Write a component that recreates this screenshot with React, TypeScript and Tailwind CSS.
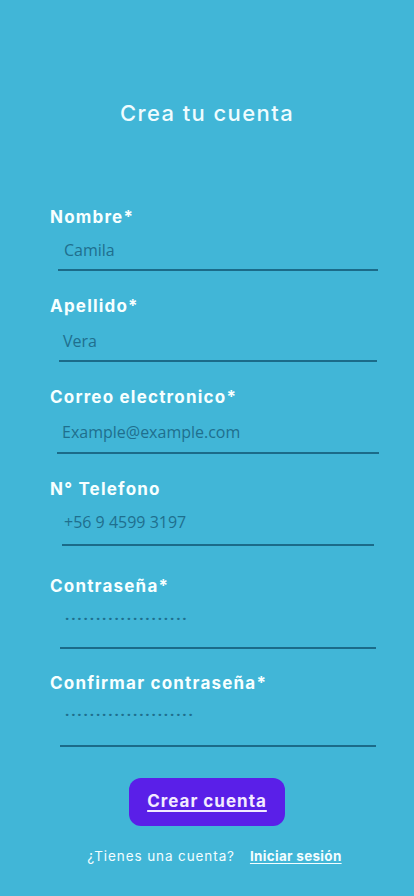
import React from "react";

type Field = {
  label: string;
  value: string;
  password?: boolean;
  labelClass: string;
  boxClass: string;
};

const FIELDS: Field[] = [
  {
    label: "Nombre*",
    value: "Camila",
    labelClass: "mt-0",
    boxClass: "mt-[10px] pb-[7px] ml-[8px] mr-[36px] pl-[6px]",
  },
  {
    label: "Apellido*",
    value: "Vera",
    labelClass: "mt-[24px]",
    boxClass: "mt-[12px] pb-[7px] ml-[9px] mr-[37px] pl-[4px]",
  },
  {
    label: "Correo electronico*",
    value: "Example@example.com",
    labelClass: "mt-[24px]",
    boxClass: "mt-[12px] pb-[8px] ml-[7px] mr-[35px] pl-[5px]",
  },
  {
    label: "N° Telefono",
    value: "+56 9 4599 3197",
    labelClass: "mt-[24px]",
    boxClass: "mt-[10px] pb-[10px] ml-[12px] mr-[40px] pl-[2px]",
  },
  {
    label: "Contraseña*",
    value: "····················",
    password: true,
    labelClass: "mt-[29px]",
    boxClass: "mt-[11px] pb-[15px] ml-[10px] mr-[38px] pl-[5px]",
  },
  {
    label: "Confirmar contraseña*",
    value: "·····················",
    password: true,
    labelClass: "mt-[23px]",
    boxClass: "mt-[10px] pb-[17px] ml-[10px] mr-[38px] pl-[5px]",
  },
];

export default function App() {
  return (
    <div className="min-h-[896px] w-full bg-[#41b6d7] font-['Inter',sans-serif]">
      <div className="pt-[99px] text-center text-[22px] leading-[28px] font-medium tracking-[1.4px] text-[#effcff]">
        Crea tu cuenta
      </div>

      {/* Form */}
      <div className="mt-[79px] pl-[50px]">
        {FIELDS.map((f) => (
          <div key={f.label}>
            <div
              className={`${f.labelClass} h-[22px] text-[17px] leading-[22px] font-bold tracking-[1.2px] text-[#f7ffff]`}
            >
              {f.label}
            </div>
            <div className={`${f.boxClass} border-b-2 border-[#1b6b89]`}>
              {f.password ? (
                <div className="h-[24px] text-[15px] leading-[20px] tracking-[1.9px] text-[#1f6f8e] font-['Open_Sans',sans-serif] font-bold">
                  {f.value}
                </div>
              ) : (
                <div className="h-[24px] text-[16px] leading-[24px] text-[#1f6f8e] font-['Open_Sans',sans-serif]">
                  {f.value}
                </div>
              )}
            </div>
          </div>
        ))}
      </div>

      <div className="mt-[31px] flex justify-center">
        <button className="h-[48px] w-[156px] rounded-[12px] bg-[#5a1fe8] text-[17px] font-bold tracking-[1px] text-[#f3ebff] underline underline-offset-[3px] decoration-2">
          Crear cuenta
        </button>
      </div>

      <div className="mt-[20px] flex justify-center gap-[15px] pl-[15px] text-[13.5px] leading-[20px] text-[#f3fdff]">
        <span className="tracking-[0.9px]">¿Tienes una cuenta?</span>
        <span className="font-bold tracking-[0.3px] underline underline-offset-2">Iniciar sesión</span>
      </div>
    </div>
  );
}
